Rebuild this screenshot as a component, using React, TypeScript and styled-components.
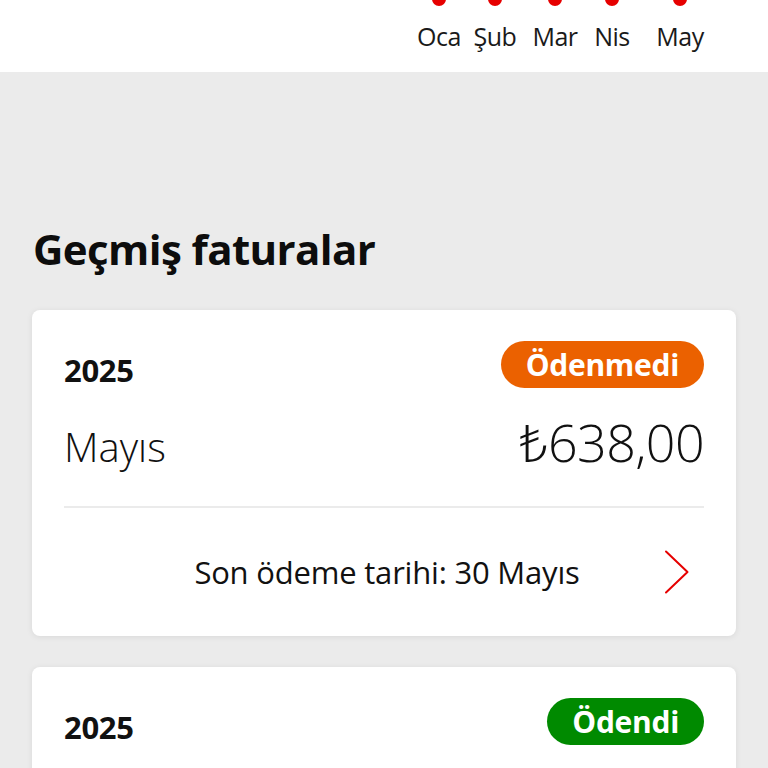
import React from "react";
import styled, { createGlobalStyle } from "styled-components";

const GlobalStyle = createGlobalStyle`
  html, body {
    margin: 0;
    padding: 0;
    background: #ebebeb;
    font-family: "Open Sans", "Noto Sans", "DejaVu Sans", sans-serif;
    color: #111;
  }
  * { box-sizing: border-box; }
`;

const Page = styled.div`
  width: 768px;
  height: 768px;
  overflow: hidden;
`;

const Header = styled.header`
  height: 72px;
  background: #fff;
  display: flex;
  padding-left: 409px;
`;

const Month = styled.div<{ $w: number }>`
  width: ${(p) => p.$w}px;
  display: flex;
  flex-direction: column;
  align-items: center;
`;

const Dot = styled.span`
  width: 14px;
  height: 14px;
  border-radius: 50%;
  background: #e60000;
  margin-top: -8px;
`;

const MonthLabel = styled.span`
  font-size: 25px;
  line-height: 30px;
  margin-top: 15px;
  color: #1a1a1a;
  letter-spacing: -0.5px;
`;

const Main = styled.main`
  padding: 153px 32px 0;
`;

const Title = styled.h2`
  margin: 0 0 37px 1px;
  font-size: 42px;
  line-height: 48px;
  font-weight: 700;
  letter-spacing: -0.6px;
  color: #0d0d0d;
`;

const List = styled.div`
  display: flex;
  flex-direction: column;
  gap: 31px;
`;

const Card = styled.section`
  background: #fff;
  border-radius: 8px;
  box-shadow: 0 1px 6px rgba(0, 0, 0, 0.08);
  padding: 31px 32px 0;
  min-height: 140px;
`;

const TopRow = styled.div`
  display: flex;
  justify-content: space-between;
  align-items: flex-end;
`;

const Year = styled.span`
  font-size: 31px;
  line-height: 30px;
  font-weight: 700;
  padding-bottom: 3px;
  letter-spacing: -0.3px;
`;

const Badge = styled.span<{ $tone: "unpaid" | "paid" }>`
  display: inline-flex;
  align-items: center;
  justify-content: center;
  height: 47px;
  padding: 0 25px;
  border-radius: 24px;
  background: ${(p) => (p.$tone === "unpaid" ? "#eb6100" : "#008a00")};
  color: #fff;
  font-size: 30px;
  font-weight: 700;
  letter-spacing: -0.3px;
`;

const AmountRow = styled.div`
  display: flex;
  justify-content: space-between;
  align-items: baseline;
  margin-top: 24px;
`;

const MonthName = styled.span`
  font-size: 40px;
  line-height: 48px;
  font-weight: 300;
  letter-spacing: 0;
`;

const Amount = styled.span`
  font-size: 52px;
  line-height: 60px;
  font-weight: 300;
  letter-spacing: -0.6px;
`;

const Divider = styled.hr`
  border: 0;
  height: 2px;
  background: #ebebeb;
  margin: 34px 0 0;
`;

const Footer = styled.div`
  height: 128px;
  display: flex;
  align-items: center;
  justify-content: center;
  position: relative;
`;

const DueText = styled.span`
  font-size: 31px;
  letter-spacing: -0.2px;
  color: #111;
  margin-left: 6px;
`;

const Chevron = styled.svg`
  position: absolute;
  right: 14px;
  top: 50%;
  transform: translateY(-50%);
`;

const months = [
  { label: "Oca", w: 60 },
  { label: "Şub", w: 52 },
  { label: "Mar", w: 68 },
  { label: "Nis", w: 46 },
  { label: "May", w: 90 },
];

export default function App() {
  return (
    <Page>
      <GlobalStyle />
      <Header>
        {months.map((m) => (
          <Month key={m.label} $w={m.w}>
            <Dot />
            <MonthLabel>{m.label}</MonthLabel>
          </Month>
        ))}
      </Header>
      <Main>
        <Title>Geçmiş faturalar</Title>
        <List>
          <Card>
            <TopRow>
              <Year>2025</Year>
              <Badge $tone="unpaid">Ödenmedi</Badge>
            </TopRow>
            <AmountRow>
              <MonthName>Mayıs</MonthName>
              <Amount>₺638,00</Amount>
            </AmountRow>
            <Divider />
            <Footer>
              <DueText>Son ödeme tarihi: 30 Mayıs</DueText>
              <Chevron width="26" height="44" viewBox="0 0 26 44" fill="none">
                <path d="M2 1.5 L23.5 22 L2 42.5" stroke="#e60000" strokeWidth="2" strokeLinecap="round" strokeLinejoin="round" />
              </Chevron>
            </Footer>
          </Card>
          <Card>
            <TopRow>
              <Year>2025</Year>
              <Badge $tone="paid">Ödendi</Badge>
            </TopRow>
          </Card>
        </List>
      </Main>
    </Page>
  );
}
